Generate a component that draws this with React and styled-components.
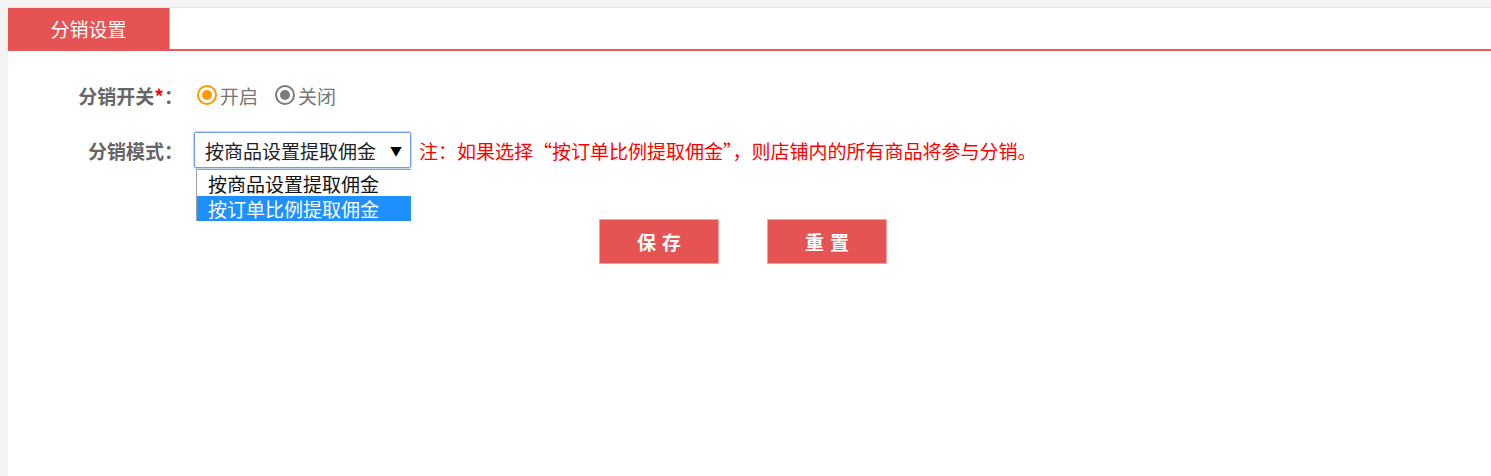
import React from 'react'
import styled, { createGlobalStyle } from 'styled-components'

const GlobalStyle = createGlobalStyle`
  body {
    margin: 0;
    background: #f3f3f3;
    font-family: "Noto Sans CJK SC", "Noto Sans", sans-serif;
  }
`

const Page = styled.div`
  padding: 7px 0 0 8px;
  height: 469px;
  overflow: hidden;
`

const Panel = styled.div`
  background: #ffffff;
  border-top: 1px solid #e6e6e6;
  height: 100%;
`

const TabBar = styled.div`
  display: flex;
  border-bottom: 2px solid #e85858;
`

const Tab = styled.div`
  width: 161px;
  height: 41px;
  background: #e55353;
  border-right: 1px solid #f29a9a;
  color: #ffffff;
  font-size: 19px;
  display: flex;
  align-items: center;
  justify-content: center;
`

const Form = styled.div`
  padding-top: 26px;
  display: flex;
  flex-direction: column;
`

const Row = styled.div`
  display: flex;
  align-items: center;
  height: 36px;
  margin-bottom: ${props => props.gap || 0}px;
`

const Label = styled.div`
  width: 175px;
  text-align: right;
  font-size: 19px;
  font-weight: bold;
  color: #666666;
  margin-right: 11px;
  white-space: nowrap;
`

const Star = styled.span`
  color: #ff0000;
`

const RadioGroup = styled.div`
  display: flex;
  align-items: center;
  margin-left: 3px;
`

const RadioItem = styled.label`
  display: flex;
  align-items: center;
  font-size: 19px;
  color: #777777;
  margin-right: 17px;
`

const RadioCircle = styled.span`
  width: 16px;
  height: 16px;
  border-radius: 50%;
  border: 2px solid ${props => props.color};
  display: flex;
  align-items: center;
  justify-content: center;
  margin-right: 3px;

  &::after {
    content: '';
    width: 10px;
    height: 10px;
    border-radius: 50%;
    background: ${props => props.color};
  }
`

const SelectWrap = styled.div`
  position: relative;
  width: 217px;
  height: 36px;
  margin-right: 8px;
`

const SelectBox = styled.div`
  box-sizing: border-box;
  width: 100%;
  height: 100%;
  border: 1px solid #6d9ee6;
  box-shadow: 0 0 0 1px #c5d9f4;
  border-radius: 2px;
  display: flex;
  align-items: center;
  justify-content: space-between;
  padding: 0 8px 0 10px;
  font-size: 19px;
  color: #222222;
`

const Arrow = styled.span`
  font-size: 12px;
  color: #000000;
`

const Menu = styled.div`
  position: absolute;
  top: 37px;
  left: 2px;
  width: 215px;
  box-sizing: border-box;
  background: #ffffff;
  border-left: 1px solid #a0a0a0;
  border-top: 1px solid #a0a0a0;
  padding-top: 1px;
`

const Option = styled.div`
  height: 25px;
  line-height: 25px;
  padding-left: 11px;
  font-size: 19px;
  color: ${props => (props.active ? '#ffffff' : '#111111')};
  background: ${props => (props.active ? '#1e90ff' : 'transparent')};
  white-space: nowrap;
`

const Note = styled.div`
  font-size: 19px;
  color: #ff0000;
  white-space: nowrap;
`

const Buttons = styled.div`
  display: flex;
  justify-content: center;
  gap: 48px;
  padding-right: 13px;
  margin-top: 51px;
`

const Button = styled.button`
  width: 120px;
  height: 45px;
  background: #e55353;
  border: 1px solid #f3a0a0;
  color: #ffffff;
  font-family: "Noto Sans CJK SC", sans-serif;
  font-size: 19px;
  font-weight: bold;
  letter-spacing: 6px;
  padding: 0 0 0 6px;
`

export default function App() {
  return (
    <>
      <GlobalStyle />
      <Page>
        <Panel>
          <TabBar>
            <Tab>分销设置</Tab>
          </TabBar>
          <Form>
            <Row gap={19}>
              <Label>
                分销开关<Star>*</Star>：
              </Label>
              <RadioGroup>
                <RadioItem>
                  <RadioCircle color='#ff9900' />
                  开启
                </RadioItem>
                <RadioItem>
                  <RadioCircle color='#7a7a7a' />
                  关闭
                </RadioItem>
              </RadioGroup>
            </Row>
            <Row>
              <Label>分销模式：</Label>
              <SelectWrap>
                <SelectBox>
                  <span>按商品设置提取佣金</span>
                  <Arrow>▼</Arrow>
                </SelectBox>
                <Menu>
                  <Option>按商品设置提取佣金</Option>
                  <Option active>按订单比例提取佣金</Option>
                </Menu>
              </SelectWrap>
              <Note>注：如果选择“按订单比例提取佣金”，则店铺内的所有商品将参与分销。</Note>
            </Row>
            <Buttons>
              <Button>保存</Button>
              <Button>重置</Button>
            </Buttons>
          </Form>
        </Panel>
      </Page>
    </>
  )
}
